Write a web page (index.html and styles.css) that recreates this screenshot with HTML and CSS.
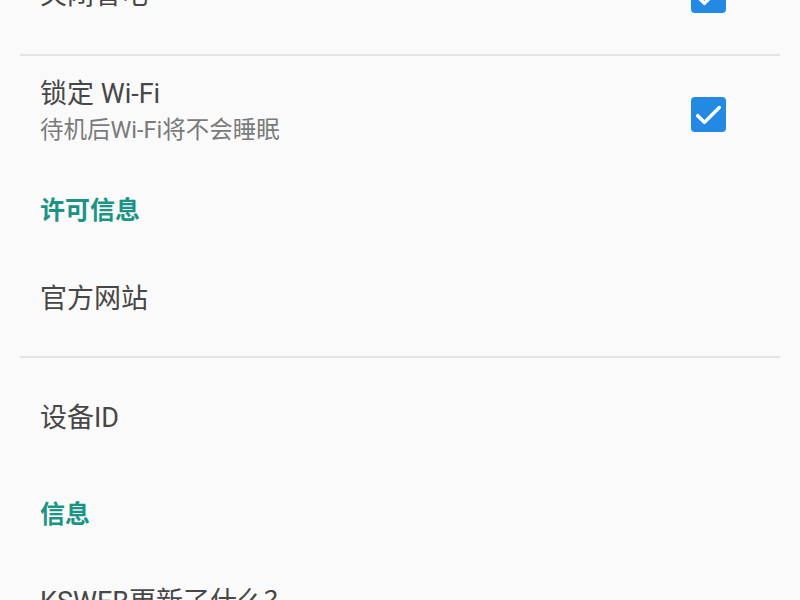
FILE: index.html
```html
<!DOCTYPE html>
<html lang="zh-CN">
<head>
    <meta charset="UTF-8">
    <meta name="viewport" content="width=device-width, initial-scale=1.0">
    <title>设置</title>
    <link rel="stylesheet" href="styles.css">
</head>
<body>
    <div class="prefs">
        <div class="row row-top">
            <div class="text">
                <div class="title">关闭省电</div>
            </div>
            <span class="check"><svg viewBox="0 0 24 24"><path d="M4.6 12.8l4.6 4.6 10.2-10.2"/></svg></span>
        </div>
        <div class="divider"></div>
        <div class="row row-wifi">
            <div class="text">
                <div class="title">锁定 Wi-Fi</div>
                <div class="summary">待机后Wi-Fi将不会睡眠</div>
            </div>
            <span class="check"><svg viewBox="0 0 24 24"><path d="M4.6 12.8l4.6 4.6 10.2-10.2"/></svg></span>
        </div>
        <div class="category cat-license">许可信息</div>
        <div class="row row-site">
            <div class="title">官方网站</div>
        </div>
        <div class="divider"></div>
        <div class="row row-device">
            <div class="title">设备ID</div>
        </div>
        <div class="category cat-info">信息</div>
        <div class="row row-news">
            <div class="title">KSWEB更新了什么？</div>
        </div>
    </div>
</body>
</html>
```

FILE: styles.css
```css
body {
    margin: 0;
    background-color: #fafafa;
    font-family: Roboto, "Noto Sans CJK SC", sans-serif;
    color: #444444;
    overflow: hidden;
}
.prefs {
    margin-top: -64px;
}
.row {
    display: flex;
    align-items: center;
    padding: 0 74px 0 40px;
}
.text {
    flex: 1;
}
.title {
    font-size: 27px;
    line-height: 36px;
    color: #474747;
}
.summary {
    font-size: 23.5px;
    line-height: 36px;
    color: #7a7a7a;
}
.check {
    width: 35px;
    height: 35px;
    border-radius: 4px;
    background-color: #2489e3;
    display: flex;
    align-items: center;
    justify-content: center;
}
.row-wifi .check {
    margin-top: 6px;
}
.check svg {
    width: 35px;
    height: 35px;
    fill: none;
    stroke: #ffffff;
    stroke-width: 2.4;
    stroke-linecap: round;
    stroke-linejoin: round;
}
.divider {
    height: 2px;
    margin: 0 20px;
    background-color: #e3e3e3;
}
.row-top {
    height: 118px;
}
.row-wifi {
    height: 111px;
}
.category {
    font-size: 25px;
    font-weight: 700;
    color: #1b9485;
    padding-left: 40px;
    line-height: 36px;
}
.cat-license {
    padding-top: 26px;
    padding-bottom: 26px;
}
.row-site {
    padding-top: 26px;
    padding-bottom: 39px;
}
.row-device {
    padding-top: 42px;
    padding-bottom: 34px;
}
.cat-info {
    padding-top: 27px;
    padding-bottom: 27px;
}
.row-news {
    padding-top: 24px;
}
```
